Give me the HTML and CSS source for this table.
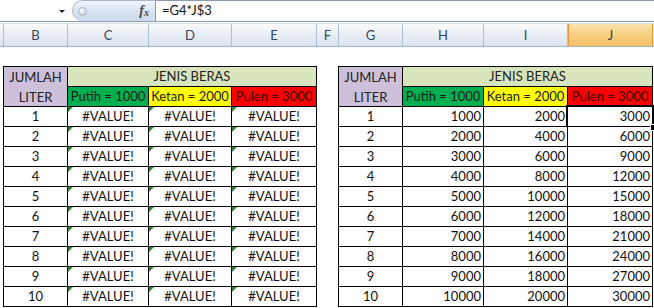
FILE: index.html
```html
<!DOCTYPE html>
<html lang="id">
<head>
<meta charset="utf-8">
<title>Harga Beras</title>
<link rel="stylesheet" href="styles.css">
</head>
<body>
<div class="formula-bar">
  <div class="name-box"><span class="nb-arrow"></span></div>
  <div class="fx-pill">
    <span class="fx-dot"></span>
    <span class="fx-label">f<sub>x</sub></span>
  </div>
  <div class="formula-input">=G4*J$3</div>
</div>

<div class="col-headers">
  <div class="ch w-a"></div>
  <div class="ch w-b">B</div>
  <div class="ch w-c">C</div>
  <div class="ch w-d">D</div>
  <div class="ch w-e">E</div>
  <div class="ch w-f">F</div>
  <div class="ch w-g">G</div>
  <div class="ch w-h">H</div>
  <div class="ch w-i">I</div>
  <div class="ch w-j active">J</div>
  <div class="ch w-k"></div>
</div>

<div class="sheet">
  <div class="tbl tbl-left">
    <div class="c qty-head">JUMLAH<br>LITER</div>
    <div class="c kind-head">JENIS BERAS</div>
    <div class="c putih">Putih = 1000</div>
    <div class="c ketan">Ketan = 2000</div>
    <div class="c pulen">Pulen = 3000</div>
  </div>
  <div class="tbl tbl-right">
    <div class="c qty-head">JUMLAH<br>LITER</div>
    <div class="c kind-head">JENIS BERAS</div>
    <div class="c putih">Putih = 1000</div>
    <div class="c ketan">Ketan = 2000</div>
    <div class="c pulen">Pulen = 3000</div>
  </div>
</div>

<script src="app.js"></script>
</body>
</html>
```

FILE: app.js
```js
// Fill both price tables: the left one shows the broken formula result,
// the right one the liter count multiplied by each rice price.
(function () {
  var prices = [1000, 2000, 3000];
  var left = document.querySelector('.tbl-left');
  var right = document.querySelector('.tbl-right');

  function cell(text, cls) {
    var d = document.createElement('div');
    d.className = 'c ' + cls;
    d.textContent = text;
    return d;
  }

  for (var n = 1; n <= 10; n++) {
    left.appendChild(cell(n, 'num'));
    for (var k = 0; k < 3; k++) {
      left.appendChild(cell('#VALUE!', 'err'));
    }
    right.appendChild(cell(n, 'num'));
    for (var j = 0; j < 3; j++) {
      var v = cell(n * prices[j], 'val');
      if (n === 1 && j === 2) {
        v.classList.add('selected');
        var handle = document.createElement('span');
        handle.className = 'fill-handle';
        v.appendChild(handle);
      }
      right.appendChild(v);
    }
  }
})();
```

FILE: styles.css
```css
html, body {
  margin: 0;
  padding: 0;
  background: #ffffff;
}

body {
  width: 654px;
  height: 308px;
  overflow: hidden;
  font-family: Lato, "Liberation Sans", sans-serif;
  font-size: 13px;
  color: #111;
}

/* ---------- formula bar ---------- */
.formula-bar {
  display: flex;
  height: 21px;
  border-bottom: 1px solid #8b9cb0;
}

.name-box {
  width: 72px;
  position: relative;
  background: #fff;
}

.nb-arrow {
  position: absolute;
  left: 59px;
  top: 10px;
  width: 0;
  height: 0;
  border-left: 3px solid transparent;
  border-right: 3px solid transparent;
  border-top: 3px solid #222;
}

.fx-pill {
  width: 84px;
  display: flex;
  align-items: center;
  justify-content: space-between;
  padding: 0 6px 0 5px;
  box-sizing: border-box;
  background: linear-gradient(#f1f5fb, #d9e3f0 55%, #cdd9e9);
  border: 1px solid #a9b9cc;
  border-bottom: 0;
  border-right: 1px solid #8b9cb0;
  border-radius: 11px 0 0 11px;
}

.fx-dot {
  width: 7px;
  height: 7px;
  border-radius: 50%;
  background: radial-gradient(circle at 40% 35%, #ffffff, #b7c3d2);
  border: 1px solid #aab6c4;
}

.fx-label {
  font-family: "Liberation Serif", serif;
  font-style: italic;
  font-weight: bold;
  font-size: 14px;
  color: #4a4a4a;
  line-height: 1;
}

.fx-label sub {
  font-size: 10px;
  vertical-align: -1px;
}

.formula-input {
  flex: 1;
  border-top: 1px solid #8b9cb0;
  padding-left: 6px;
  line-height: 19px;
  color: #111;
}

/* ---------- column headers ---------- */
.col-headers {
  display: flex;
  height: 22px;
  margin-top: 1px;
  border-top: 1px solid #d5dfea;
  border-bottom: 1px solid #9eb6ce;
  background: linear-gradient(#f9fbfd, #e6ecf4 55%, #dbe3ee);
}

.ch {
  box-sizing: border-box;
  border-right: 1px solid #a9bed3;
  text-align: center;
  line-height: 22px;
  color: #34465e;
  flex: none;
}

.ch.active {
  background: linear-gradient(#fbe3ad, #f7ce7c 55%, #f5c067);
  border-right-color: #f29436;
  border-left: 1px solid #f29436;
  color: #3b3b3b;
}

.w-a { width: 4px; }
.w-b { width: 64px; }
.w-c { width: 81px; }
.w-d { width: 83px; }
.w-e { width: 85px; }
.w-f { width: 22px; }
.w-g { width: 64px; }
.w-h { width: 81px; }
.w-i { width: 84px; }
.w-j { width: 85px; }
.w-k { flex: 1; border-right: 0; }

/* ---------- worksheet tables ---------- */
.sheet {
  display: flex;
  gap: 21px;
  padding-left: 3px;
  margin-top: 19px;
}

.tbl {
  display: grid;
  grid-auto-rows: 19px;
  gap: 1px;
  padding: 1px;
  background: #000;
}

.tbl-left  { grid-template-columns: 63px 80px 82px 84px; }
.tbl-right { grid-template-columns: 63px 80px 83px 84px; }

.c {
  background: #fff;
  line-height: 19px;
  white-space: nowrap;
  overflow: visible;
  position: relative;
}

.qty-head {
  grid-row: span 2;
  background: #ccc0da;
  text-align: center;
  line-height: 20px;
  color: #222;
}

.kind-head {
  grid-column: span 3;
  background: #d8e4bc;
  text-align: center;
  color: #222;
}

.putih { background: #00b050; text-align: center; color: #1a1a1a; }
.ketan { background: #ffff00; text-align: center; color: #1a1a1a; }
.pulen { background: #ff0000; text-align: center; color: #3a0000; }

.num { text-align: center; }
.err { text-align: center; }
.val { text-align: right; padding-right: 2px; }

/* error indicator in the top-left corner of a cell */
.err::before {
  content: "";
  position: absolute;
  left: 0;
  top: 0;
  border-top: 5px solid #2f8a2f;
  border-right: 5px solid transparent;
}

/* active cell outline with fill handle */
.selected::after {
  content: "";
  position: absolute;
  left: -2px;
  top: -2px;
  right: -2px;
  bottom: -2px;
  border: 2px solid #000;
  box-shadow: inset 0 0 0 1px #fff;
}

.fill-handle {
  position: absolute;
  right: -5px;
  bottom: -5px;
  width: 5px;
  height: 5px;
  background: #000;
  border: 1px solid #fff;
  z-index: 2;
}
```
